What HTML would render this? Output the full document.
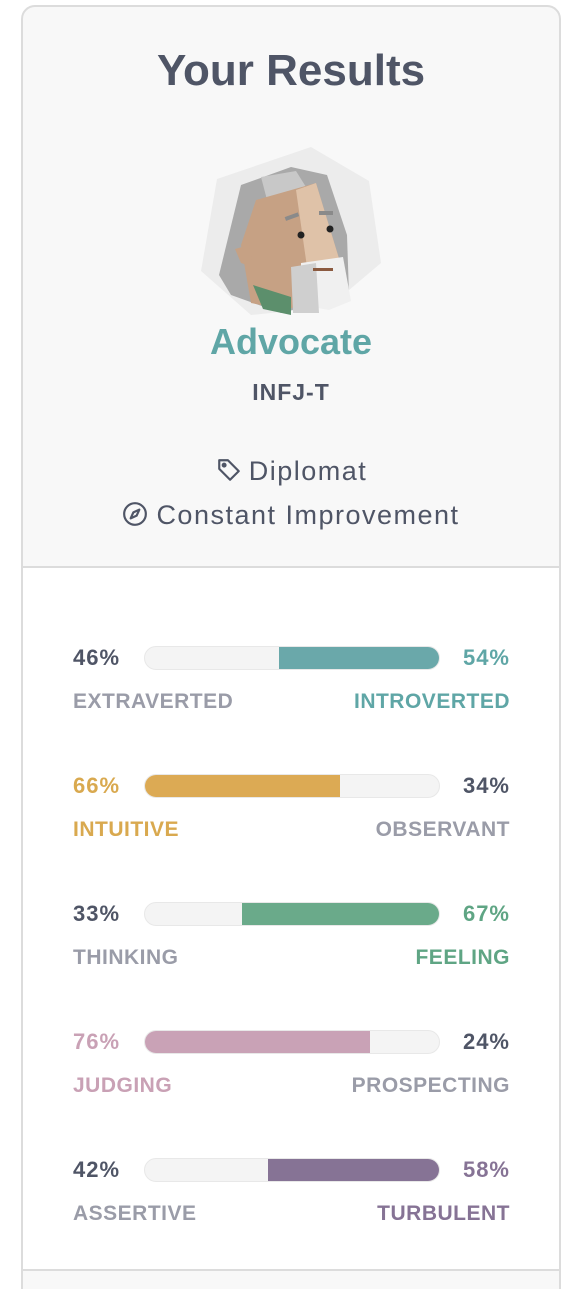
<!DOCTYPE html>
<html style="width:575px;height:1289px;overflow:hidden"><head><meta charset="utf-8"><style>
*{margin:0;padding:0;box-sizing:border-box}
body{width:575px;height:1289px;background:#fff;font-family:"Liberation Sans",sans-serif;position:relative;overflow:hidden;color:#4f5566}
.card{position:absolute;left:21px;top:5px;width:540px;height:1340px;border:2px solid #dcdcdc;border-radius:14px;background:#f8f8f8;overflow:hidden}
.body{position:absolute;left:0;top:559px;width:536px;height:705px;background:#fff;border-top:2px solid #dcdcdc;border-bottom:2px solid #dcdcdc}
.t{position:absolute;left:0;width:536px;text-align:center}
.pct{position:absolute;font-size:22px;font-weight:bold;line-height:24px;letter-spacing:1px}
.lbl{position:absolute;font-size:21px;font-weight:bold;line-height:24px;color:#9a9ca8;letter-spacing:0.5px}
.bar{position:absolute;left:121px;width:296px;height:24px;border-radius:12px;background:#f4f4f4;border:1px solid #e8e8e8;overflow:hidden}
.bar div{position:absolute;top:-1px;bottom:-1px}
</style></head><body>
<div class="card">
<div class="t" style="top:38px;font-size:44px;font-weight:bold;line-height:52px">Your Results</div>
<svg style="position:absolute;left:178px;top:138px" width="184" height="172" viewBox="0 0 184 172">
<polygon points="110,2 168,36 180,118 128,162 50,170 0,126 16,34" fill="#ececec"/>
<polygon points="40,40 90,22 126,30 146,90 148,150 80,168 30,150 18,130" fill="#a9a9a9"/>
<polygon points="60,32 95,26 110,50 70,70" fill="#c8c8c8"/>
<polygon points="55,55 115,38 140,120 130,150 85,165 50,158 40,100" fill="#c6a184"/>
<polygon points="95,45 115,38 140,120 130,150 110,150" fill="#dfc2a8"/>
<polygon points="34,104 48,100 52,122 40,118" fill="#c6a184"/>
<polygon points="100,118 142,112 150,156 128,165 100,160" fill="#f0f0f0"/>
<polygon points="90,122 115,118 118,168 92,168" fill="#cfcfcf"/>
<polygon points="52,140 90,152 90,170 62,164" fill="#5c8f6c"/>
<rect x="84" y="70" width="14" height="4" fill="#8a8a8a" transform="rotate(-20 90 72)"/>
<rect x="118" y="66" width="14" height="4" fill="#8a8a8a"/>
<circle cx="100" cy="90" r="3.5" fill="#222"/>
<circle cx="129" cy="84" r="3.5" fill="#222"/>
<rect x="112" y="123" width="20" height="3" fill="#8b5a40"/>
</svg>
<div class="t" style="top:314px;font-size:36px;font-weight:bold;color:#5fa6a6;line-height:42px">Advocate</div>
<div class="t" style="top:371px;font-size:23px;font-weight:bold;line-height:28px;letter-spacing:1px">INFJ-T</div>
<div class="t" style="top:448px;font-size:27px;line-height:32px;letter-spacing:1.5px"><svg width="28" height="26" viewBox="0 0 24 24" style="vertical-align:-3px;margin-right:6px" fill="none" stroke="#4f5566" stroke-width="2" stroke-linejoin="round"><path d="M3 3h8l10 10-8 8L3 11z"/><circle cx="7.5" cy="7.5" r="1.3" fill="#4f5566"/></svg>Diplomat</div>
<div class="t" style="top:492px;font-size:27px;line-height:32px;letter-spacing:1.5px"><svg width="26" height="26" viewBox="0 0 24 24" style="vertical-align:-3px;margin-right:8px" fill="none" stroke="#4f5566" stroke-width="2"><circle cx="12" cy="12" r="10"/><path d="M16 8l-2.5 5.5L8 16l2.5-5.5z" stroke-linejoin="round"/></svg>Constant Improvement</div>
<div class="body">
<div class="pct" style="left:50px;top:78px">46%</div>
<div class="bar" style="top:78px"><div style="left:134px;right:0;background:#6aa8aa"></div></div>
<div class="pct" style="right:49px;top:78px;color:#5fa6a6">54%</div>
<div class="lbl" style="left:50px;top:122px">EXTRAVERTED</div>
<div class="lbl" style="right:49px;top:122px;color:#5fa6a6">INTROVERTED</div>

<div class="pct" style="left:50px;top:206px;color:#d9a94f">66%</div>
<div class="bar" style="top:206px"><div style="left:0;width:195px;background:#dcaa54"></div></div>
<div class="pct" style="right:49px;top:206px">34%</div>
<div class="lbl" style="left:50px;top:250px;color:#d9a94f">INTUITIVE</div>
<div class="lbl" style="right:49px;top:250px">OBSERVANT</div>

<div class="pct" style="left:50px;top:334px">33%</div>
<div class="bar" style="top:334px"><div style="left:97px;right:0;background:#6aaa8a"></div></div>
<div class="pct" style="right:49px;top:334px;color:#5fa584">67%</div>
<div class="lbl" style="left:50px;top:378px">THINKING</div>
<div class="lbl" style="right:49px;top:378px;color:#5fa584">FEELING</div>

<div class="pct" style="left:50px;top:462px;color:#c9a1b5">76%</div>
<div class="bar" style="top:462px"><div style="left:0;width:225px;background:#c9a2b6"></div></div>
<div class="pct" style="right:49px;top:462px">24%</div>
<div class="lbl" style="left:50px;top:506px;color:#c9a1b5">JUDGING</div>
<div class="lbl" style="right:49px;top:506px">PROSPECTING</div>

<div class="pct" style="left:50px;top:590px">42%</div>
<div class="bar" style="top:590px"><div style="left:123px;right:0;background:#867395"></div></div>
<div class="pct" style="right:49px;top:590px;color:#867395">58%</div>
<div class="lbl" style="left:50px;top:634px">ASSERTIVE</div>
<div class="lbl" style="right:49px;top:634px;color:#867395">TURBULENT</div>
</div>
</div>
</body></html>
